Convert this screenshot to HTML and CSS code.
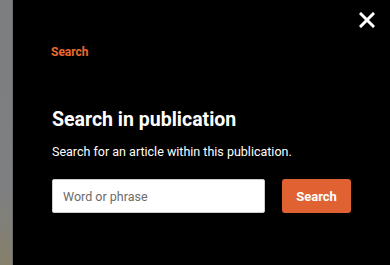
FILE: index.html
```html
<!DOCTYPE html>
<html>
<head>
<meta charset="utf-8">
<link rel="stylesheet" href="styles.css">
</head>
<body>
<div class="page">
  <div class="backdrop-strip">
    <div class="strip-edge"></div>
  </div>
  <div class="modal">
    <button class="close" aria-label="Close">
      <svg width="16" height="16" viewBox="0 0 16 16"><path d="M2 2 L14 14 M14 2 L2 14" stroke="#fff" stroke-width="3" stroke-linecap="square"/></svg>
    </button>
    <div class="label">Search</div>
    <h1 class="title">Search in publication</h1>
    <p class="desc">Search for an article within this publication.</p>
    <form class="search-row">
      <input class="field" type="text" placeholder="Word or phrase">
      <button class="submit" type="button">Search</button>
    </form>
  </div>
</div>
</body>
</html>
```
FILE: styles.css
```css
* { box-sizing: border-box; }
html, body { margin: 0; padding: 0; }
body {
  width: 390px;
  height: 265px;
  overflow: hidden;
  background: #000;
  font-family: Roboto, "Liberation Sans", sans-serif;
}
.page {
  display: flex;
  height: 265px;
}
.backdrop-strip {
  width: 13px;
  flex: none;
  background: linear-gradient(to bottom, #7d7e80 0%, #7e7f81 70%, #80807c 80%, #86806a 100%);
  display: flex;
  justify-content: flex-end;
}
.strip-edge {
  width: 1px;
  background: #6d6d6d;
}
.modal {
  position: relative;
  flex: 1;
  background: #000;
  padding: 44px 0 0 39px;
}
.close {
  position: absolute;
  top: 12px;
  right: 15px;
  background: none;
  border: 0;
  padding: 0;
  width: 16px;
  height: 16px;
  cursor: pointer;
}
.close svg { display: block; }
.label {
  color: #ec6a2c;
  font-size: 12px;
  font-weight: 700;
  line-height: 16px;
  margin-left: -1px;
}
.title {
  margin: 48px 0 0;
  color: #fff;
  font-size: 19.5px;
  font-weight: 700;
  line-height: 24px;
}
.desc {
  margin: 11px 0 0;
  color: #fff;
  font-size: 12.5px;
  line-height: 18px;
}
.search-row {
  display: flex;
  gap: 17px;
  margin-top: 18px;
}
.field {
  width: 213px;
  height: 34px;
  border: 1px solid #ccc;
  border-radius: 2px;
  padding: 0 10px;
  font-family: Roboto, "Liberation Sans", sans-serif;
  font-size: 12.5px;
  color: #333;
  background: #fff;
  outline: none;
}
.field::placeholder { color: #6b6b6b; }
.submit {
  width: 69px;
  height: 34px;
  border: 0;
  border-radius: 3px;
  background: #e06232;
  color: #fff;
  font-family: Roboto, "Liberation Sans", sans-serif;
  font-size: 13px;
  font-weight: 700;
  cursor: pointer;
}
```
